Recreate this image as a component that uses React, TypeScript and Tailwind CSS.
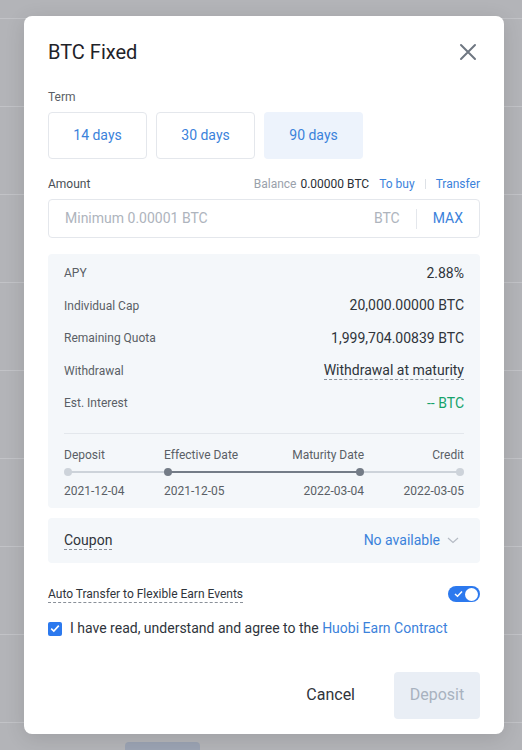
import React from "react";

const font = { fontFamily: "Roboto, 'Liberation Sans', sans-serif" };

function InfoRow({ label, children }: { label: string; children: React.ReactNode }) {
  return (
    <div className="flex items-center justify-between h-[32.5px]">
      <span className="text-[12px] text-[#5a5f66]">{label}</span>
      {children}
    </div>
  );
}

export default function App() {
  const rows = Array.from({ length: 9 });
  return (
    <div style={font} className="relative w-[522px] h-[750px] overflow-hidden bg-[#b3b4b8]">
      {/* page behind the overlay */}
      <div className="flex flex-col pt-[18px]">
        {rows.map((_, i) => (
          <div key={i} className="h-[88px] border-t border-[#c2c3c7]" />
        ))}
      </div>
      <div className="absolute left-[125px] top-[742px] w-[75px] h-[12px] rounded bg-[#9ba3b3]" />

      {/* modal */}
      <div className="absolute left-[24px] top-[16px] w-[480px] h-[718px] rounded-[8px] bg-white px-[24px] shadow-[0_4px_20px_rgba(0,0,0,0.12)]">
        <div className="flex items-center justify-between h-[72px]">
          <span className="text-[20px] text-[#1f2329]">BTC Fixed</span>
          <svg width="18" height="18" viewBox="0 0 18 18" className="mr-[3px]">
            <path d="M2 2 L16 16 M16 2 L2 16" stroke="#6f7782" strokeWidth="2" strokeLinecap="round" />
          </svg>
        </div>

        <div className="text-[12px] text-[#5a5f66] leading-[16px] mt-[1px]">Term</div>
        <div className="flex gap-[9px] mt-[7px]">
          <div className="w-[99px] h-[47px] rounded-[4px] border border-[#e4e7ec] flex items-center justify-center text-[14px] text-[#3b82db]">14 days</div>
          <div className="w-[99px] h-[47px] rounded-[4px] border border-[#e4e7ec] flex items-center justify-center text-[14px] text-[#3b82db]">30 days</div>
          <div className="w-[99px] h-[47px] rounded-[4px] bg-[#edf3fc] flex items-center justify-center text-[14px] text-[#3b82db]">90 days</div>
        </div>

        <div className="flex items-center justify-between mt-[17px] h-[16px] text-[12px]">
          <span className="text-[#4a4f56]">Amount</span>
          <div className="flex items-center">
            <span className="text-[#9aa1ab]">Balance</span>
            <span className="text-[#2a2f36] ml-[4px]">0.00000 BTC</span>
            <span className="text-[#3b82db] ml-[10px]">To buy</span>
            <span className="w-px h-[10px] bg-[#dde1e6] mx-[10px]" />
            <span className="text-[#3b82db]">Transfer</span>
          </div>
        </div>

        <div className="mt-[7px] h-[39px] rounded-[4px] border border-[#e4e7ec] flex items-center pl-[16px] pr-[16px]">
          <span className="flex-1 text-[14px] text-[#aeb4bd]">Minimum 0.00001 BTC</span>
          <span className="text-[14px] text-[#aeb4bd]">BTC</span>
          <span className="w-px h-[20px] bg-[#e4e7ec] mx-[16px]" />
          <span className="text-[14px] text-[#3b82db]">MAX</span>
        </div>

        <div className="mt-[16px] rounded-[4px] bg-[#f4f7fa] px-[16px] pt-[3px] pb-[9px]">
          <InfoRow label="APY">
            <span className="text-[14px] text-[#2f343b]">2.88%</span>
          </InfoRow>
          <InfoRow label="Individual Cap">
            <span className="text-[14px] text-[#2f343b]">20,000.00000 BTC</span>
          </InfoRow>
          <InfoRow label="Remaining Quota">
            <span className="text-[14px] text-[#2f343b]">1,999,704.00839 BTC</span>
          </InfoRow>
          <InfoRow label="Withdrawal">
            <span className="text-[14px] text-[#2f343b] border-b border-dashed border-[#8a9099] leading-[18px]">Withdrawal at maturity</span>
          </InfoRow>
          <InfoRow label="Est. Interest">
            <span className="text-[14px] text-[#14a36a]">-- BTC</span>
          </InfoRow>

          <div className="h-px bg-[#e3e7ec] mt-[13px]" />

          <div className="relative mt-[13px]">
            <div className="grid grid-cols-4 text-[12px] text-[#5a5f66] leading-[16px]">
              <span>Deposit</span>
              <span>Effective Date</span>
              <span className="text-right">Maturity Date</span>
              <span className="text-right">Credit</span>
            </div>
            <div className="relative h-[20px]">
              <div className="absolute left-[4px] right-[4px] top-[8px] h-[2px] bg-[#cdd3da]" />
              <div className="absolute left-[104px] right-[104px] top-[8px] h-[2px] bg-[#747c87]" />
              <div className="absolute left-0 top-[5px] w-[8px] h-[8px] rounded-full bg-[#cdd3da]" />
              <div className="absolute left-[100px] top-[5px] w-[8px] h-[8px] rounded-full bg-[#747c87]" />
              <div className="absolute right-[100px] top-[5px] w-[8px] h-[8px] rounded-full bg-[#747c87]" />
              <div className="absolute right-0 top-[5px] w-[8px] h-[8px] rounded-full bg-[#cdd3da]" />
            </div>
            <div className="grid grid-cols-4 text-[12px] text-[#5a5f66] leading-[16px]">
              <span>2021-12-04</span>
              <span>2021-12-05</span>
              <span className="text-right">2022-03-04</span>
              <span className="text-right">2022-03-05</span>
            </div>
          </div>
        </div>

        <div className="mt-[10px] h-[45px] rounded-[4px] bg-[#f4f7fa] pl-[16px] pr-[20px] flex items-center justify-between">
          <span className="text-[14px] text-[#2f343b] border-b border-dashed border-[#8a9099] leading-[18px]">Coupon</span>
          <div className="flex items-center">
            <span className="text-[14px] text-[#3b82db]">No available</span>
            <svg width="14" height="14" viewBox="0 0 14 14" className="ml-[6px]">
              <path d="M2 5 L7 9.5 L12 5" fill="none" stroke="#b5bbc4" strokeWidth="1.2" />
            </svg>
          </div>
        </div>

        <div className="mt-[23px] flex items-center justify-between h-[17px]">
          <span className="text-[12px] text-[#2f343b] border-b border-dashed border-[#8a9099] leading-[16px]">Auto Transfer to Flexible Earn Events</span>
          <div className="w-[32px] h-[16px] rounded-full bg-[#2c79ee] flex items-center justify-end pr-[2px] relative">
            <svg width="9" height="8" viewBox="0 0 9 8" className="absolute left-[6px] top-[4px]">
              <path d="M1 4 L3.5 6.3 L8 1.5" fill="none" stroke="white" strokeWidth="1.5" />
            </svg>
            <div className="w-[13px] h-[13px] rounded-full bg-white" />
          </div>
        </div>

        <div className="mt-[16px] flex items-center h-[20px]">
          <div className="w-[14px] h-[14px] rounded-[2px] bg-[#2c79ee] flex items-center justify-center">
            <svg width="10" height="9" viewBox="0 0 10 9">
              <path d="M1.2 4.6 L3.8 7 L8.8 1.6" fill="none" stroke="white" strokeWidth="1.6" />
            </svg>
          </div>
          <span className="ml-[8px] text-[14px] text-[#2f343b]">
            I have read, understand and agree to the <span className="text-[#3b82db]">Huobi Earn Contract</span>
          </span>
        </div>

        <div className="mt-[33px] flex items-center justify-end">
          <span className="text-[16px] text-[#2f343b] mr-[39px]">Cancel</span>
          <div className="w-[86px] h-[47px] rounded-[4px] bg-[#e9eef5] flex items-center justify-center text-[16px] text-[#a8b2bf]">Deposit</div>
        </div>
      </div>
    </div>
  );
}
